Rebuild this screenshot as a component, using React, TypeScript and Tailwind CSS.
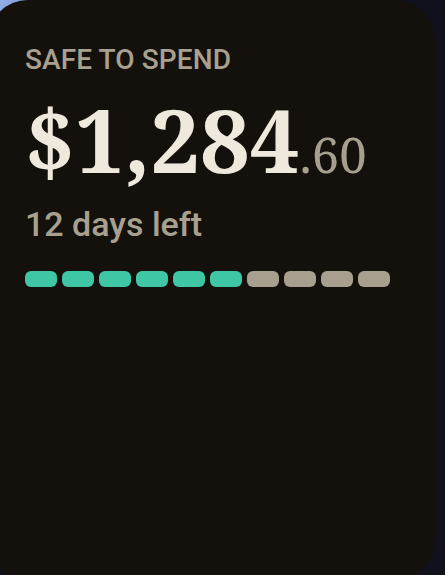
const SEGMENTS = 10;
const FILLED = 6;

export default function App() {
  return (
    <div className="w-[445px] h-[575px] overflow-hidden bg-[radial-gradient(circle_at_0_0,#93aee6_0px,#7f9bd6_30px,#10111d_70px)]">
      <div className="-ml-[12px] w-[447px] h-[580px] rounded-[40px] bg-[#14110d] pl-[37px] pt-[46px] font-['Roboto',sans-serif]">
        {/* Label */}
        <div className="text-[28px] leading-[28px] font-medium text-[#a9a18f] tracking-[0.1px]">SAFE TO SPEND</div>

        {/* Amount */}
        <div className="mt-[21px] text-[88px] leading-[88px] font-['Noto_Serif',serif] text-[#efe8dc] whitespace-nowrap">
          <span className="font-bold">$1,284</span>
          <span className="text-[49px] leading-none text-[#a8a08e]">.60</span>
        </div>

        {/* Days */}
        <div className="mt-[24px] text-[34px] leading-[34px] font-medium text-[#a9a18f]">12 days left</div>

        {/* Progress */}
        <div className="mt-[30px] flex gap-[5px]">
          {Array.from({ length: SEGMENTS }).map((_, i) => (
            <div
              key={i}
              className={`w-[32px] h-[16px] rounded-[6px] ${i < FILLED ? 'bg-[#3fc6a5]' : 'bg-[#a8a08e]'}`}
            />
          ))}
        </div>
      </div>
    </div>
  );
}
